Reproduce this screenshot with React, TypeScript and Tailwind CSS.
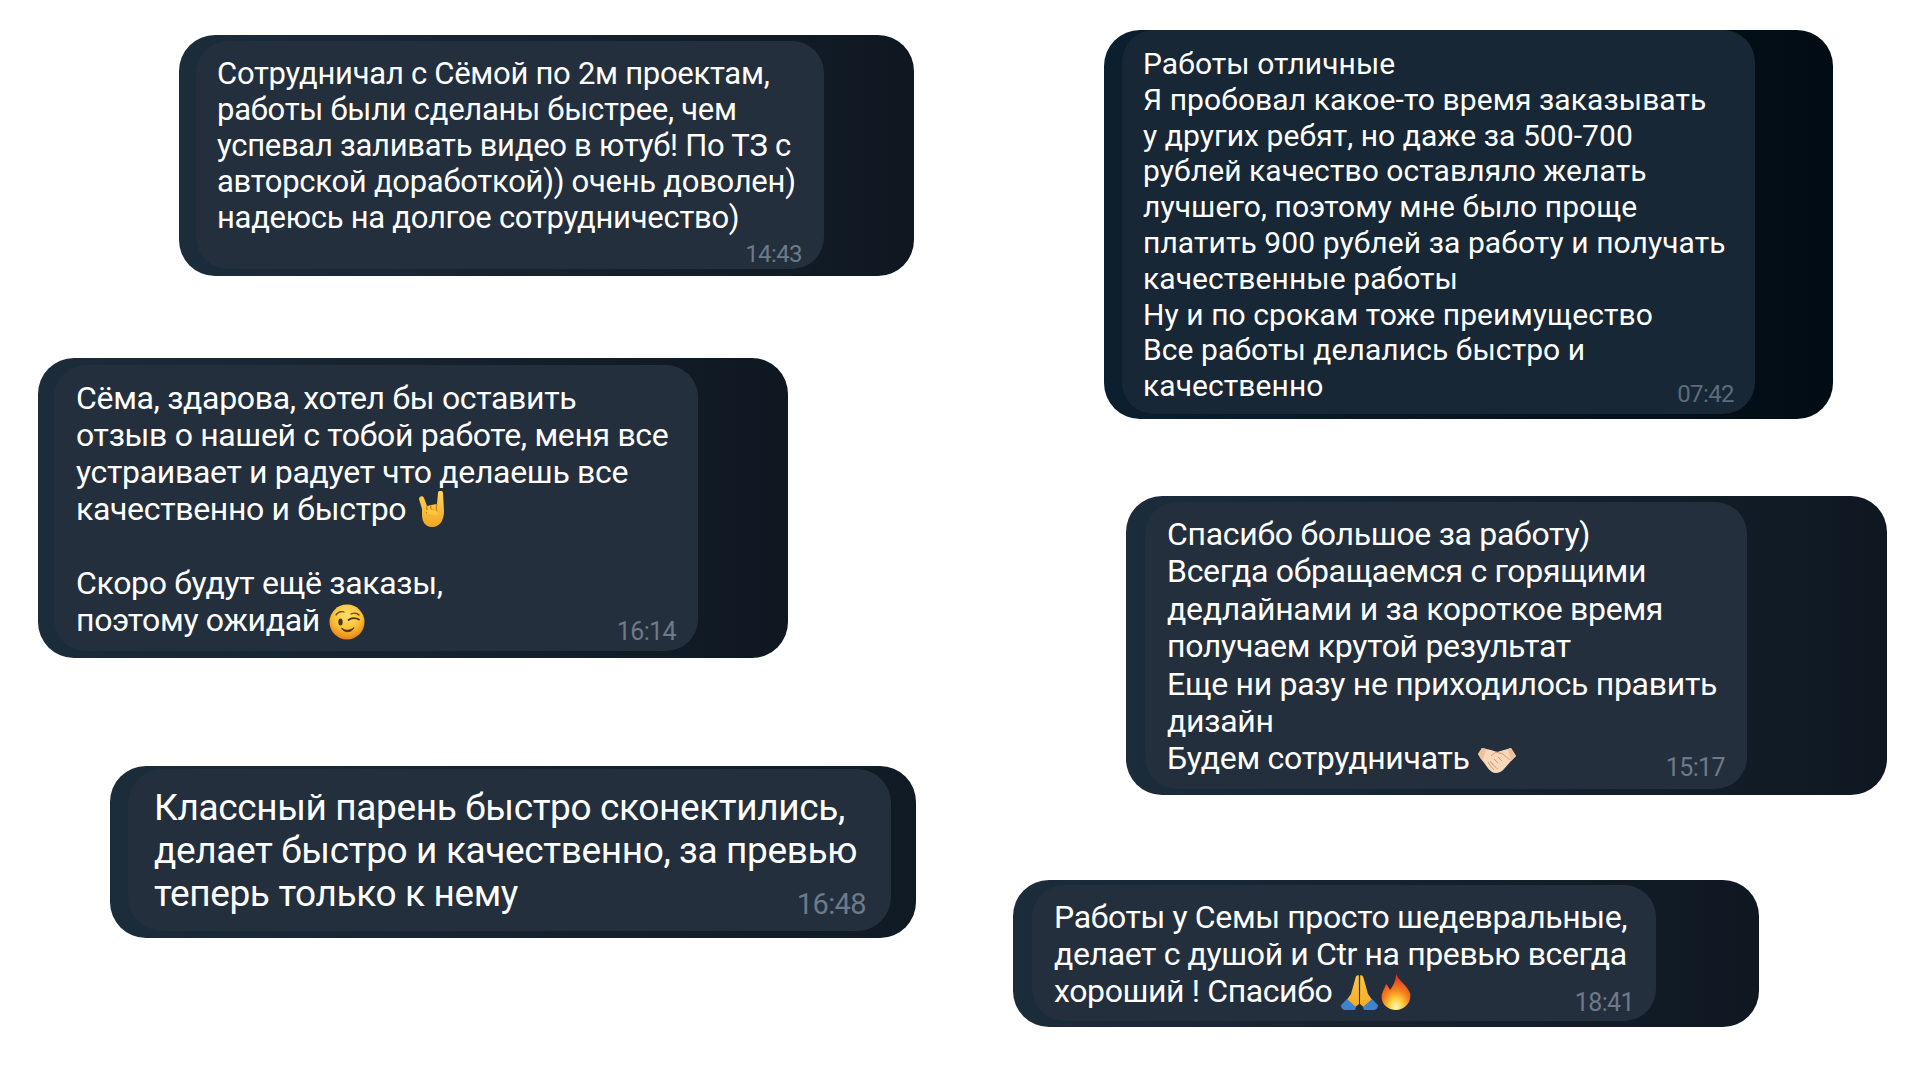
import React from "react";

function Horns() {
  return (
    <svg width="27" height="36" viewBox="0 0 27 36" className="inline-block ml-[4px] align-[-7px]">
      <defs>
        <linearGradient id="hornG" x1="0" y1="0" x2="0" y2="1">
          <stop offset="0" stopColor="#fdd75c" />
          <stop offset="1" stopColor="#f4a51f" />
        </linearGradient>
      </defs>
      <path d="M1 8 C1 5 5 4 6 7 L9 15 L13 14 L19 13 L20 2 C20 -1 25 -1 25 2 L26 20 C26 29 22 36 14 36 C7 36 4 30 4 24 L4 18 Z" fill="url(#hornG)" />
      <path d="M9 15 C8 18 10 21 12 20 M13 14 C12 17 14 20 16 19 M19 13 C18 16 18 18 19 21 M8 22 C11 20 16 21 19 24" stroke="#c97f14" strokeWidth="1.2" fill="none" />
      <path d="M9 19 C12 18 17 19 20 21 L19 25 C15 23 11 23 9 23 Z" fill="#fbc441" />
    </svg>
  );
}
function Wink() {
  return (
    <svg width="36" height="36" viewBox="0 0 36 36" className="inline-block ml-[1px] align-[-9px]">
      <defs>
        <radialGradient id="winkG" cx="0.5" cy="0.3" r="0.72">
          <stop offset="0" stopColor="#fee06a" />
          <stop offset="0.55" stopColor="#fbc239" />
          <stop offset="1" stopColor="#e87d12" />
        </radialGradient>
      </defs>
      <circle cx="18" cy="18" r="17.5" fill="url(#winkG)" />
      <ellipse cx="11.5" cy="18" rx="2.2" ry="3.6" fill="#4d3115" />
      <path d="M19.5 16 C22 14 26 13.5 30 15.5" stroke="#4d3115" strokeWidth="1.7" fill="none" strokeLinecap="round" />
      <path d="M7 11 C9 8 12 7 15 8 M22 10 C25 8.5 28 9 30 11" stroke="#6b4314" strokeWidth="1.3" fill="none" strokeLinecap="round" />
      <path d="M12.5 24 C16 27 21 27 25 23.5 C23.5 28.5 15 29.5 12.5 24 Z" fill="#4d3115" stroke="#4d3115" strokeWidth="0.8" />
    </svg>
  );
}
function Shake() {
  return (
    <svg width="38" height="26" viewBox="0 0 38 26" className="inline-block ml-[1px] align-[-5px]">
      <path d="M0 6 L4 0 L13 2 L19 4 L26 2 L33 0 L38 8 L33 13 L26 21 C23 25 17 26 14 24 C11 22 9 19 7 16 L3 11 Z" fill="#f7d8bb" />
      <path d="M0 6 L4 0 L8 1 L5 11 L3 11 Z M38 8 L33 0 L30 1 L33 13 Z" fill="#efc09a" />
      <path d="M13 8 L18 4 L25 6 L32 12 M12 13 L15 17 M16 11 L20 15 M20 9 L24 13 M10 14 C12 17 14 20 16 22 M14 15 C16 18 18 20 20 21" stroke="#d59c74" strokeWidth="1" fill="none" />
    </svg>
  );
}
function Pray() {
  return (
    <svg width="37" height="36" viewBox="0 0 37 36" className="inline-block ml-[1px] align-[-8px]">
      <defs>
        <linearGradient id="prayG" x1="0" y1="0" x2="0" y2="1">
          <stop offset="0" stopColor="#fbc74b" />
          <stop offset="1" stopColor="#f6a821" />
        </linearGradient>
      </defs>
      <path d="M17.8 1.5 C16 1 15 2 14.5 4 L10 20 L5 27 L12 35 L18 30 Z" fill="url(#prayG)" />
      <path d="M19.2 1.5 C21 1 22 2 22.5 4 L27 20 L32 27 L25 35 L19 30 Z" fill="url(#prayG)" />
      <path d="M6 25 L0 31 C0 34 2 36 5 36 L14 36 L15 33 Z M31 25 L37 31 C37 34 35 36 32 36 L23 36 L22 33 Z" fill="#3f83cf" />
    </svg>
  );
}
function Fire() {
  return (
    <svg width="30" height="36" viewBox="0 0 30 36" className="inline-block ml-[3px] align-[-8px]">
      <defs>
        <radialGradient id="fireG" cx="0.5" cy="0.92" r="0.8">
          <stop offset="0" stopColor="#fff6c0" />
          <stop offset="0.3" stopColor="#fdcf3c" />
          <stop offset="0.6" stopColor="#f7821f" />
          <stop offset="1" stopColor="#e33c22" />
        </radialGradient>
      </defs>
      <path d="M15 0 C18 7 26 11 29 19 C31 28 24 36 15 36 C6 36 -1 29 1 20 C2 16 4 14 5 10 C7 12 8 14 9 16 C12 12 15 7 15 0 Z" fill="url(#fireG)" />
    </svg>
  );
}

function B({ inner, text, time, tone, children }: { inner: string; text: string; time: string; tone: string; children: React.ReactNode }) {
  return (
    <div className={inner}>
      <div className={text}>{children}</div>
      <div className={tone}>{time}</div>
    </div>
  );
}

const outerDark = "bg-gradient-to-r from-[#1b2c3b] via-[#152230] to-[#0f1821]";

export default function App() {
  return (
    <div className="w-[1920px] h-[1080px] bg-white overflow-hidden flex font-['Roboto',sans-serif] text-white">
      <div className="w-[1013px] shrink-0 flex flex-col">
        <div className={`ml-[179px] mt-[35px] w-[735px] h-[241px] rounded-[36px] p-[6px] pl-[17px] pb-[7px] ${outerDark}`}>
          <B inner="relative h-full w-[628px] rounded-[32px] bg-[#242f3d] pl-[21px] pt-[15px]" text="text-[31px] leading-[36px] tracking-[-0.28px] whitespace-pre" time="14:43" tone="absolute right-[22px] bottom-[-1px] text-[24px] leading-[32px] text-[#6d7a89] tracking-[-0.6px]">
            {"Сотрудничал с Сёмой по 2м проектам,\nработы были сделаны быстрее, чем\nуспевал заливать видео в ютуб! По ТЗ с\nавторской доработкой)) очень доволен)\nнадеюсь на долгое сотрудничество)"}
          </B>
        </div>
        <div className={`ml-[38px] mt-[82px] w-[750px] h-[300px] rounded-[36px] p-[7px] pl-[16px] ${outerDark}`}>
          <B inner="relative h-full w-[644px] rounded-[32px] bg-[#242f3d] pl-[22px] pt-[15px]" text="text-[32px] leading-[37px] tracking-[-0.33px] whitespace-pre" time="16:14" tone="absolute right-[22px] bottom-[3px] text-[25px] leading-[32px] text-[#6d7a89] tracking-[-0.6px]">
            <>
              {"Сёма, здарова, хотел бы оставить\nотзыв о нашей с тобой работе, меня все\nустраивает и радует что делаешь все\nкачественно и быстро "}
              <Horns />
              {"\n\nСкоро будут ещё заказы,\nпоэтому ожидай "}
              <Wink />
            </>
          </B>
        </div>
        <div className="ml-[110px] mt-[108px] w-[806px] h-[172px] rounded-[36px] pl-[18px] pr-[25px] pt-[3px] pb-[7px] bg-gradient-to-r from-[#1b2c3b] to-[#101a24]">
          <B inner="relative h-full rounded-[34px] bg-[#242f3d] pl-[26px] pt-[17px]" text="text-[37px] leading-[43px] tracking-[-0.37px] whitespace-pre" time="16:48" tone="absolute right-[25px] bottom-[9px] text-[29px] leading-[36px] text-[#6d7a89] tracking-[-0.6px]">
            {"Классный парень быстро сконектились,\nделает быстро и качественно, за превью\nтеперь только к нему"}
          </B>
        </div>
      </div>
      <div className="flex-1 flex flex-col">
        <div className="ml-[91px] mt-[30px] w-[729px] h-[389px] rounded-[36px] pl-[18px] pb-[5px] bg-gradient-to-r from-[#0b1f2e] via-[#071622] to-[#020c14]">
          <B inner="relative h-full w-[633px] rounded-[32px] bg-[#172735] pl-[21px] pt-[16px]" text="text-[30px] leading-[35.8px] tracking-[0.08px] whitespace-pre" time="07:42" tone="absolute right-[21px] bottom-[4px] text-[24px] leading-[32px] text-[#5d6c7a] tracking-[-0.6px]">
            {"Работы отличные\nЯ пробовал какое-то время заказывать\nу других ребят, но даже за 500-700\nрублей качество оставляло желать\nлучшего, поэтому мне было проще\nплатить 900 рублей за работу и получать\nкачественные работы\nНу и по срокам тоже преимущество\nВсе работы делались быстро и\nкачественно"}
          </B>
        </div>
        <div className={`ml-[113px] mt-[77px] w-[761px] h-[299px] rounded-[36px] pl-[19px] py-[6px] ${outerDark}`}>
          <B inner="relative h-full w-[602px] rounded-[32px] bg-[#242f3d] pl-[22px] pt-[14px]" text="text-[32px] leading-[37.4px] tracking-[-0.3px] whitespace-pre" time="15:17" tone="absolute right-[22px] bottom-[5px] text-[25px] leading-[32px] text-[#6d7a89] tracking-[-0.6px]">
            <>
              {"Спасибо большое за работу)\nВсегда обращаемся с горящими\nдедлайнами и за короткое время\nполучаем крутой результат\nЕще ни разу не приходилось править\nдизайн\nБудем сотрудничать "}
              <Shake />
            </>
          </B>
        </div>
        <div className={`mt-[85px] w-[746px] h-[147px] rounded-[36px] pl-[19px] pt-[5px] pb-[6px] ${outerDark}`}>
          <B inner="relative h-full w-[624px] rounded-[32px] bg-[#242f3d] pl-[22px] pt-[14px]" text="text-[32px] leading-[37px] tracking-[-0.38px] whitespace-pre" time="18:41" tone="absolute right-[22px] bottom-[2px] text-[25px] leading-[32px] text-[#6d7a89] tracking-[-0.6px]">
            <>
              {"Работы у Семы просто шедевральные,\nделает с душой и Ctr на превью всегда\nхороший ! Спасибо "}
              <Pray />
              <Fire />
            </>
          </B>
        </div>
      </div>
    </div>
  );
}
